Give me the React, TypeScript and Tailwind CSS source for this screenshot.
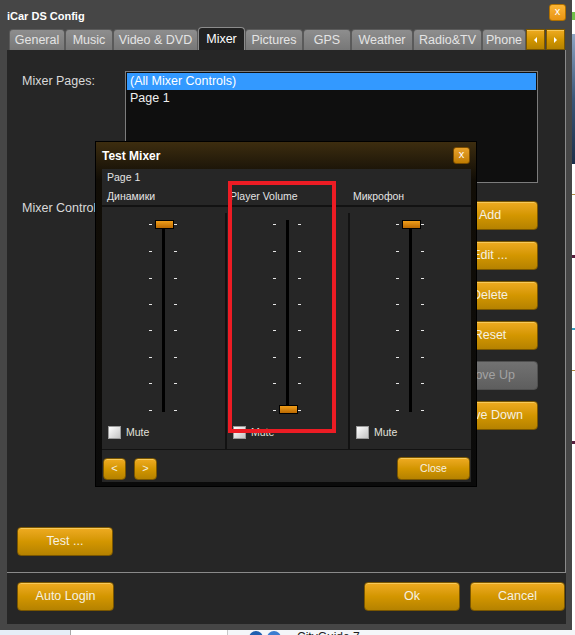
import React from 'react';

type Tab = { label: string; w: string; active?: boolean };

const TABS: Tab[] = [
  { label: 'General', w: 'w-[56px]' },
  { label: 'Music', w: 'w-[48px]' },
  { label: 'Video & DVD', w: 'w-[85px]' },
  { label: 'Mixer', w: 'w-[47px]', active: true },
  { label: 'Pictures', w: 'w-[58px]' },
  { label: 'GPS', w: 'w-[48px]' },
  { label: 'Weather', w: 'w-[62px]' },
  { label: 'Radio&TV', w: 'w-[69px]' },
  { label: 'Phone', w: 'w-[44px]' },
];

const orange =
  'border border-[#7a5600] bg-linear-to-b from-[#efab20] via-[#d39600] to-[#b58200] text-[#f6f1e2] shadow-[inset_0_1px_0_rgba(255,225,140,0.55)]';

function OrangeButton({ children, className = '' }: { children: React.ReactNode; className?: string }) {
  return (
    <button
      type="button"
      className={`flex h-[29px] items-center justify-center rounded-[4px] text-[12.5px] ${orange} ${className}`}
    >
      {children}
    </button>
  );
}

function Slider({ level, id }: { level: 'top' | 'bottom'; id: string }) {
  const ticks = [5, 32, 59, 85, 111, 138, 164, 191];
  const thumbY = level === 'top' ? 1.5 : 186.5;
  return (
    <svg width="31" height="196" viewBox="0 0 31 196" className="block">
      <defs>
        <linearGradient id={id} x1="0" y1="0" x2="0" y2="1">
          <stop offset="0" stopColor="#f4a21c" />
          <stop offset="1" stopColor="#b86600" />
        </linearGradient>
      </defs>
      {ticks.map((y) => (
        <g key={y} fill="#e6e6e6">
          <rect x="1" y={y} width="3" height="1" />
          <rect x="26" y={y} width="3" height="1" />
        </g>
      ))}
      <rect x="14" y="1" width="3" height="192" fill="#000" />
      <rect x="7.5" y={thumbY} width="18" height="8" fill={`url(#${id})`} stroke="#000" />
    </svg>
  );
}

function MixerColumn({ level, id, sep }: { level: 'top' | 'bottom'; id: string; sep?: boolean }) {
  return (
    <div className="flex">
      {sep && <div className="mt-[6px] w-[2px] bg-[#121212]" />}
      <div className="flex flex-1 flex-col pt-[12px] pb-[10px]">
        <div className="flex justify-center">
          <Slider level={level} id={id} />
        </div>
        <div className="mt-[11px] ml-[6px] flex items-center gap-[5px]">
          <span className="h-[13px] w-[13px] border border-[#9a9a9a] bg-linear-to-br from-white to-[#c4c4c4]" />
          <span className="text-[10.5px] leading-[13px] text-[#e2e2dc]">Mute</span>
        </div>
      </div>
    </div>
  );
}

function TestMixer() {
  return (
    <div className="absolute top-[141px] left-[95px] z-20 flex h-[346px] w-[382px] flex-col border border-black bg-linear-to-b from-[#3d2d0f] via-[#110d06] via-[11%] to-[#0a0a0a] pb-[4px]">
      <div className="flex h-[28px] items-center justify-between pr-[6px] pl-[6px]">
        <span className="text-[12px] font-bold text-white">Test Mixer</span>
        <span className="flex h-[17px] w-[17px] items-center justify-center rounded-[3px] border border-[#7a4c00] bg-linear-to-b from-[#e9a22a] to-[#c07c00] pb-[2px] text-[11px] leading-none text-white">
          x
        </span>
      </div>
      <div className="mr-[5px] ml-[6px] flex flex-1 flex-col bg-[#262626] text-[10.5px] text-[#e4e4e4]">
        <div className="pt-px pl-[5px] leading-[15px]">Page 1</div>
        <div className="mt-[4px] grid grid-cols-3 leading-[15px]">
          <span className="pl-[5px]">Динамики</span>
          <span className="pl-[5px]">Player Volume</span>
          <span className="pl-[5px]">Микрофон</span>
        </div>
        <div className="mt-px h-[2px] bg-[#121212]" />
        <div className="grid grid-cols-3">
          <MixerColumn level="top" id="th1" />
          <MixerColumn level="bottom" id="th2" sep />
          <MixerColumn level="top" id="th3" sep />
        </div>
        <div className="h-px bg-[#121212]" />
        <div className="flex items-center justify-between px-px pt-[7px] pb-[2px]">
          <div className="flex gap-[8px]">
            <button type="button" className={`flex h-[22px] w-[23px] items-center justify-center rounded-[4px] text-[11px] ${orange}`}>
              &lt;
            </button>
            <button type="button" className={`flex h-[22px] w-[23px] items-center justify-center rounded-[4px] text-[11px] ${orange}`}>
              &gt;
            </button>
          </div>
          <button type="button" className={`flex h-[23px] w-[73px] items-center justify-center rounded-[4px] text-[10.5px] ${orange}`}>
            Close
          </button>
        </div>
      </div>
    </div>
  );
}

function TabArrow({ dir }: { dir: 'left' | 'right' }) {
  return (
    <div className={`flex h-[21px] w-[19px] items-center justify-center ${orange}`}>
      {dir === 'left' ? (
        <span className="h-0 w-0 border-y-[3px] border-r-[3px] border-y-transparent border-r-white" />
      ) : (
        <span className="h-0 w-0 border-y-[3px] border-l-[3px] border-y-transparent border-l-white" />
      )}
    </div>
  );
}

export default function App() {
  return (
    <div className="relative h-[635px] w-[575px] overflow-hidden bg-[#f2f2f2] font-['Liberation_Sans',Arial,sans-serif]">
      <div className="flex">
        {/* main window */}
        <div className="flex h-[630px] w-[572px] flex-col bg-[#464646] pr-[6px] pb-[6px] pl-[7px]">
          <div className="flex h-[28px] items-start justify-between">
            <span className="mt-[8px] text-[11px] font-bold text-white">iCar DS Config</span>
            <span className="mt-[4px] flex h-[17px] w-[17px] items-center justify-center rounded-[3px] border border-[#b07000] bg-linear-to-b from-[#fbb534] to-[#e89412] pb-[2px] text-[11px] leading-none text-white">
              x
            </span>
          </div>
          <div className="-ml-[7px] flex h-[22px] items-end pl-[9px] text-[12.5px]">
            {TABS.map((t) =>
              t.active ? (
                <div
                  key={t.label}
                  className={`${t.w} flex h-[23px] items-center justify-center rounded-t-[4px] border border-b-0 border-[#8c8c8c] bg-[#212121] text-white`}
                >
                  {t.label}
                </div>
              ) : (
                <div
                  key={t.label}
                  className={`${t.w} flex h-[21px] items-center justify-center overflow-hidden rounded-t-[4px] border border-b-0 border-[#5a5a5a] bg-linear-to-b from-[#8e8e8e] to-[#777] whitespace-nowrap text-[#e4e4e4]`}
                >
                  {t.label}
                </div>
              ),
            )}
            <div className="flex gap-px">
              <TabArrow dir="left" />
              <TabArrow dir="right" />
            </div>
          </div>

          <div className="flex flex-1 flex-col bg-[#262626] text-[12.5px] text-[#dadada]">
            <div className="flex h-[523px] flex-col border-r border-b border-[#8a8a8a]">
              <div className="flex pt-[21px]">
                <span className="mt-[2px] w-[118px] pl-[15px] leading-[17px]">Mixer Pages:</span>
                <div className="h-[112px] w-[413px] border border-[#7c7c7c] bg-[#0f0f0f] p-px">
                  <div className="h-[17px] bg-[#3399ff] pl-[3px] leading-[17px] text-white">(All Mixer Controls)</div>
                  <div className="h-[17px] pl-[3px] leading-[17px] text-[#f0f0f0]">Page 1</div>
                </div>
              </div>
              <div className="mt-[18px] flex justify-between pr-[27px]">
                <span className="pl-[15px] leading-[15px]">Mixer Controls:</span>
                <div className="flex w-[96px] flex-col gap-[11px]">
                  <OrangeButton>Add</OrangeButton>
                  <OrangeButton>Edit ...</OrangeButton>
                  <OrangeButton>Delete</OrangeButton>
                  <OrangeButton>Reset</OrangeButton>
                  <button
                    type="button"
                    className="flex h-[29px] items-center justify-center rounded-[4px] border border-[#505050] bg-linear-to-b from-[#727272] to-[#5e5e5e] text-[12.5px] text-[#a2a2a2]"
                  >
                    Move Up
                  </button>
                  <OrangeButton>Move Down</OrangeButton>
                </div>
              </div>
              <OrangeButton className="mt-auto mb-[16px] ml-[10px] w-[96px]">Test ...</OrangeButton>
            </div>
            <div className="flex items-start justify-between pt-[9px] pr-px pl-[10px]">
              <OrangeButton className="w-[97px]">Auto Login</OrangeButton>
              <div className="flex gap-[10px]">
                <OrangeButton className="w-[96px]">Ok</OrangeButton>
                <OrangeButton className="w-[95px]">Cancel</OrangeButton>
              </div>
            </div>
          </div>
        </div>

        {/* desktop behind, right edge */}
        <div className="flex h-[630px] w-[3px] flex-col bg-white">
          <div className="mt-[12px] h-[8px] bg-[#6fbf4a]" />
          <div className="mt-[14px] h-[130px] bg-linear-to-b from-[#8fa6c4] via-[#3a5678] to-[#1d2f4a]" />
          <div className="mt-[30px] h-px bg-[#b08a40]" />
          <div className="mt-[60px] h-[3px] bg-[#5a2040]" />
          <div className="mt-[70px] h-[2px] bg-[#3aa0c0]" />
          <div className="mt-[40px] h-px bg-[#b08a40]" />
          <div className="mt-[70px] h-[3px] bg-[#5a2040]" />
        </div>
      </div>

      {/* desktop behind, bottom edge */}
      <div className="flex h-[5px] items-start overflow-hidden bg-[#f4f6f9] text-[12px] leading-none text-[#202020]">
        <div className="h-full w-[70px] bg-[#e6eef7]" />
        <div className="h-full w-px bg-[#a8a8a8]" />
        <div className="h-full w-[156px] bg-white" />
        <div className="h-full w-px bg-[#c8c8c8]" />
        <div className="ml-[21px] mt-px h-[14px] w-[14px] rounded-full bg-[#1f5fb0]" />
        <div className="ml-[4px] mt-px h-[14px] w-[14px] rounded-full bg-[#3b7dd0]" />
        <span className="ml-[16px] mt-[1px]">CityGuide 7</span>
      </div>

      <TestMixer />

      {/* red annotation box */}
      <div className="pointer-events-none absolute top-[181px] left-[228px] z-30 h-[252px] w-[108px] border-4 border-[#ed1c24]" />
    </div>
  );
}
